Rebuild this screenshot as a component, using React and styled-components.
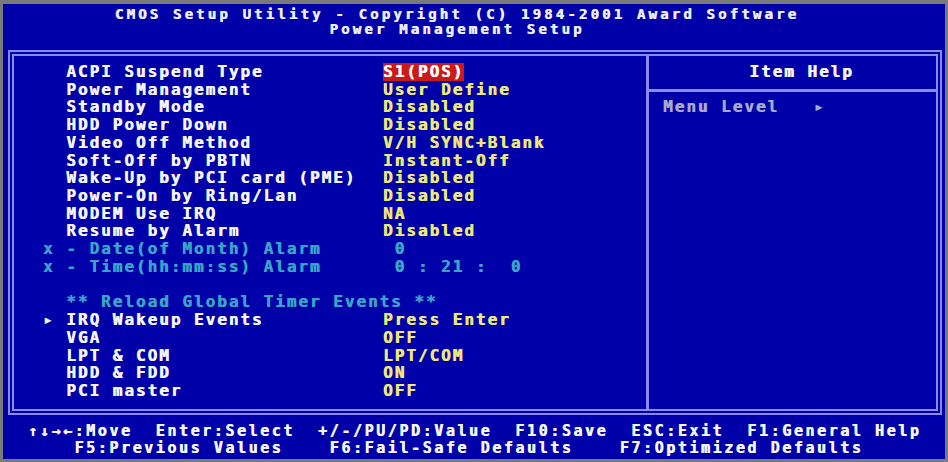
import React from "react";
import styled, { createGlobalStyle } from "styled-components";

const GlobalStyle = createGlobalStyle`
  html, body {
    margin: 0;
    padding: 0;
    background: #7a7a7a;
  }
`;

const Screen = styled.div`
  margin: 4px 3px 3px 3px;
  height: 455px;
  background: #0000a8;
  display: flex;
  flex-direction: column;
  font-family: "DejaVu Sans Mono", "Liberation Mono", monospace;
  font-weight: bold;
  font-size: 16px;
  letter-spacing: 1.97px;
  color: #f4f4f4;
  white-space: pre;
  text-shadow: 0.6px 0 0 currentColor;
`;

const Title = styled.div`
  height: 46px;
  padding: 3px 34px 0 0;
  box-sizing: border-box;
  text-align: center;
  line-height: 15px;
  font-size: 14px;
  letter-spacing: 3.17px;
  color: #ececf4;
`;

const MainBox = styled.div`
  display: flex;
  height: 365px;
  margin: 0 3px 0 5px;
  box-sizing: border-box;
  border: 6px double #8a8af0;
`;

const ItemsPanel = styled.div`
  flex: 1;
  padding: 7px 0 0 29px;
  border-right: 3px solid #8a8af0;
`;

const Row = styled.div`
  display: flex;
  height: 17.72px;
  line-height: 17.72px;
`;

const toneColor = {
  normal: "#f4f4f4",
  dim: "#38a4c8",
};

const Label = styled.span`
  width: 340px;
  flex: none;
  color: ${(p) => toneColor[p.$tone || "normal"]};
`;

const Value = styled.span`
  color: ${(p) => (p.$selected ? "#ffffff" : p.$dim ? "#38a4c8" : "#eee878")};
  background: ${(p) => (p.$selected ? "#cc1a1a" : "transparent")};
`;

const SectionHeading = styled.span`
  color: #38a4c8;
`;

const HelpPanel = styled.div`
  width: 287px;
  display: flex;
  flex-direction: column;
`;

const HelpHeader = styled.div`
  padding: 7px 0 8px 18px;
  line-height: 17.72px;
  text-align: center;
  border-bottom: 3px solid #8a8af0;
`;

const HelpLine = styled.div`
  padding: 6px 0 0 14px;
  line-height: 17.72px;
  color: #a8a8cc;
`;

const Footer = styled.div`
  padding: 8px 0 0 25px;
  line-height: 17px;
  font-size: 15px;
  letter-spacing: 2.57px;
`;

const items = [
  { label: "  ACPI Suspend Type", value: "S1(POS)", selected: true },
  { label: "  Power Management", value: "User Define" },
  { label: "  Standby Mode", value: "Disabled" },
  { label: "  HDD Power Down", value: "Disabled" },
  { label: "  Video Off Method", value: "V/H SYNC+Blank" },
  { label: "  Soft-Off by PBTN", value: "Instant-Off" },
  { label: "  Wake-Up by PCI card (PME)", value: "Disabled" },
  { label: "  Power-On by Ring/Lan", value: "Disabled" },
  { label: "  MODEM Use IRQ", value: "NA" },
  { label: "  Resume by Alarm", value: "Disabled" },
  { label: "x - Date(of Month) Alarm", value: " 0", dim: true },
  { label: "x - Time(hh:mm:ss) Alarm", value: " 0 : 21 :  0", dim: true },
  { blank: true },
  { heading: "  ** Reload Global Timer Events **" },
  { label: "\u25b8 IRQ Wakeup Events", value: "Press Enter" },
  { label: "  VGA", value: "OFF" },
  { label: "  LPT & COM", value: "LPT/COM" },
  { label: "  HDD & FDD", value: "ON" },
  { label: "  PCI master", value: "OFF" },
];

export default function App() {
  return (
    <>
      <GlobalStyle />
      <Screen>
        <Title>
          <div>CMOS Setup Utility - Copyright (C) 1984-2001 Award Software</div>
          <div>Power Management Setup</div>
        </Title>
        <MainBox>
          <ItemsPanel>
            {items.map((it, i) => (
              <Row key={i}>
                {it.heading ? (
                  <SectionHeading>{it.heading}</SectionHeading>
                ) : it.blank ? null : (
                  <>
                    <Label $tone={it.dim ? "dim" : "normal"}>{it.label}</Label>
                    <Value $selected={it.selected} $dim={it.dim}>
                      {it.value}
                    </Value>
                  </>
                )}
              </Row>
            ))}
          </ItemsPanel>
          <HelpPanel>
            <HelpHeader>Item Help</HelpHeader>
            <HelpLine>{"Menu Level   \u25b8"}</HelpLine>
          </HelpPanel>
        </MainBox>
        <Footer>
          <div>{"\u2191\u2193\u2192\u2190:Move  Enter:Select  +/-/PU/PD:Value  F10:Save  ESC:Exit  F1:General Help"}</div>
          <div>{"    F5:Previous Values    F6:Fail-Safe Defaults    F7:Optimized Defaults"}</div>
        </Footer>
      </Screen>
    </>
  );
}
